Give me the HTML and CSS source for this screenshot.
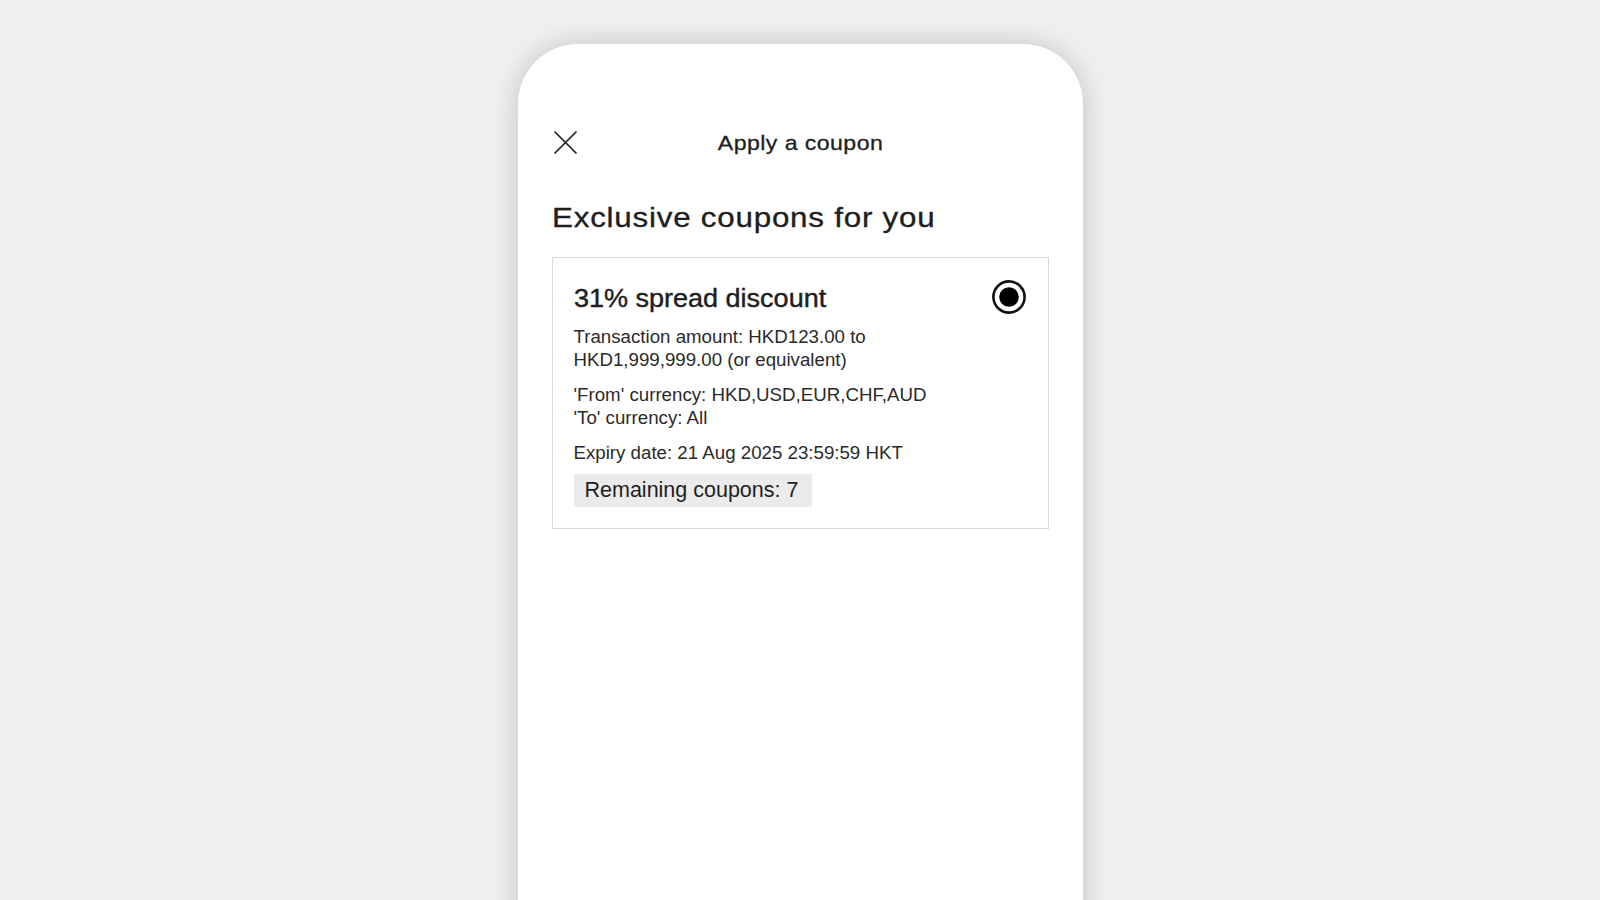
FILE: index.html
```html
<!DOCTYPE html>
<html lang="en">
<head>
<meta charset="utf-8">
<title>Apply a coupon</title>
<link rel="stylesheet" href="styles.css">
</head>
<body>
<div class="stage">
  <div class="phone">
    <header class="topbar">
      <button class="close" aria-label="Close">
        <svg width="23" height="23" viewBox="0 0 23 23"><path d="M1 1 L22 22 M22 1 L1 22" stroke="#1f1f1f" stroke-width="1.7" fill="none" stroke-linecap="round"/></svg>
      </button>
      <div class="topbar-title">Apply a coupon</div>
      <div class="spacer"></div>
    </header>
    <h1 class="heading">Exclusive coupons for you</h1>
    <section class="card">
      <div class="card-head">
        <div class="card-title">31% spread discount</div>
        <svg class="radio" width="34" height="34" viewBox="0 0 34 34"><circle cx="17" cy="17" r="15.6" fill="#fff" stroke="#111" stroke-width="2.6"/><circle cx="17" cy="17" r="9.8" fill="#000"/></svg>
      </div>
      <p class="line first">Transaction amount: HKD123.00 to<br>HKD1,999,999.00 (or equivalent)</p>
      <p class="line">'From' currency: HKD,USD,EUR,CHF,AUD<br>'To' currency: All</p>
      <p class="line">Expiry date: 21 Aug 2025 23:59:59 HKT</p>
      <div class="badge">Remaining coupons: 7</div>
    </section>
  </div>
</div>
</body>
</html>
```

FILE: styles.css
```css
html, body {
  margin: 0;
  padding: 0;
  height: 100%;
  overflow: hidden;
}
body {
  background: #f0f0f0;
  font-family: "Liberation Sans", Arial, sans-serif;
  color: #1c1c1c;
}
.stage {
  display: flex;
  justify-content: center;
  padding-top: 44px;
}
.phone {
  width: 565px;
  height: 900px;
  box-sizing: border-box;
  background: #fff;
  border-radius: 60px 60px 0 0;
  box-shadow: 0 0 28px rgba(0, 0, 0, 0.2);
  padding: 86px 34px 0 34px;
}
.topbar {
  display: grid;
  grid-template-columns: 26px 1fr 26px;
  align-items: center;
  height: 24px;
}
.close {
  border: 0;
  background: none;
  padding: 0;
  margin-left: 2px;
  width: 23px;
  height: 23px;
  display: flex;
}
.topbar-title {
  text-align: center;
  font-weight: 400;
  font-size: 21px;
  line-height: 24px;
  letter-spacing: 0.4px;
  color: #1e1e1e;
  -webkit-text-stroke: 0.3px #1e1e1e;
  transform: scaleX(1.1);
  margin-top: 1px;
}
.heading {
  margin: 46px 0 0 0;
  font-weight: 400;
  font-size: 28.5px;
  line-height: 34px;
  letter-spacing: 0.7px;
  color: #1e1e1e;
  -webkit-text-stroke: 0.35px #1e1e1e;
  transform: scaleX(1.1);
  transform-origin: 0 50%;
}
.card {
  margin-top: 23px;
  border: 1px solid #d9d9d9;
  padding: 25px 22px 21px 21px;
}
.card-head {
  display: flex;
  justify-content: space-between;
  align-items: center;
  height: 30px;
}
.card-title {
  font-weight: 400;
  font-size: 25px;
  line-height: 30px;
  color: #1e1e1e;
  -webkit-text-stroke: 0.4px #1e1e1e;
  transform: scaleX(1.08);
  transform-origin: 0 50%;
}
.radio {
  display: block;
  margin-top: -3px;
}
.line {
  margin: 13px 0 0 0;
  font-size: 18.7px;
  line-height: 22.5px;
  color: #2a2a2a;
}
.line.first {
  margin-top: 13px;
}
.badge {
  display: inline-block;
  margin-top: 9.5px;
  background: #ebebeb;
  font-size: 21.5px;
  line-height: 33px;
  padding: 0 14px 0 11px;
  color: #1e1e1e;
}
```
